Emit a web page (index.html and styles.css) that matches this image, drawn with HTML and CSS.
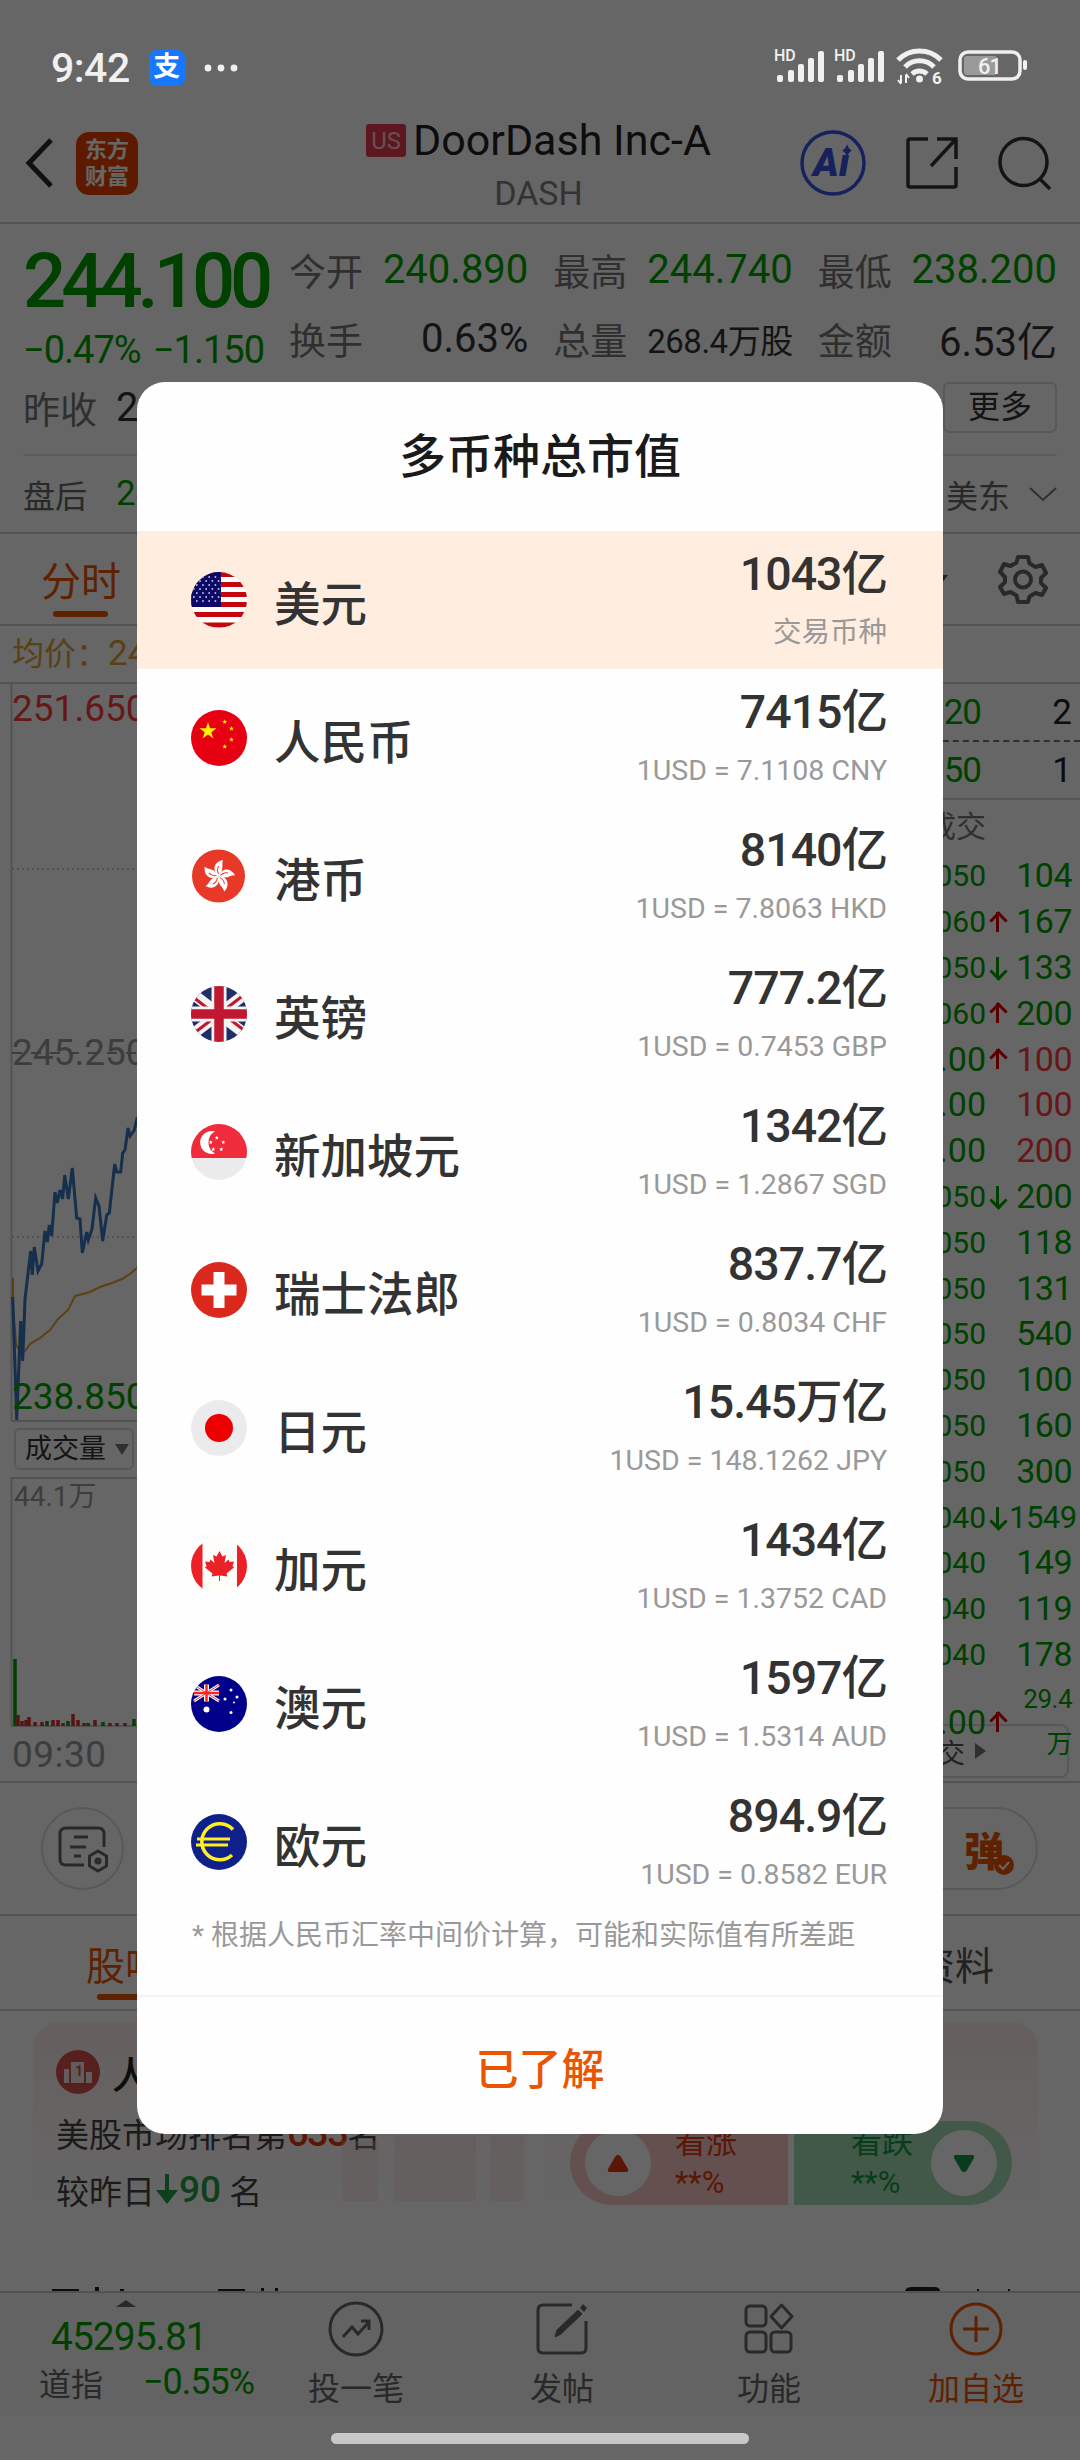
FILE: index.html
```html
<!DOCTYPE html>
<html lang="zh-CN">
<head>
  <meta charset="UTF-8" />
  <meta name="viewport" content="width=device-width, initial-scale=1.0"/>
  <title>DoorDash Inc-A</title>
  <link rel="stylesheet" href="styles.css">
</head>
<body>
  <div class="page">
    <div class="status-bar">
      <div class="status-left">
        <span class="clock">9:42</span>
        <span class="alipay">支</span>
        <svg width="34" height="10" viewBox="0 0 34 10" fill="#f0f0f0"><circle cx="4" cy="5" r="3.4"/><circle cx="17" cy="5" r="3.4"/><circle cx="30" cy="5" r="3.4"/></svg>
      </div>
      <svg class="status-icons" width="256" height="40" viewBox="0 0 256 40" fill="#f0f0f0">
        <text x="0" y="13" class="hd">HD</text>
        <g id="signal"><rect x="3" y="27" width="6" height="7" rx="2"/><rect x="14" y="22" width="6" height="12" rx="2"/><rect x="24" y="16" width="6" height="18" rx="2"/><rect x="34" y="10" width="6" height="24" rx="2"/><rect x="44" y="3" width="6" height="31" rx="2"/></g>
        <text x="60" y="13" class="hd">HD</text>
        <use href="#signal" x="60"/>
        <g fill="none" stroke="#f0f0f0" stroke-width="5"><path d="M124 12a30 30 0 0 1 43 0"/><path d="M131 19a20 20 0 0 1 29 0"/><path d="M138 26a11 11 0 0 1 15 0"/></g>
        <circle cx="145.500" cy="31" r="3.500"/>
        <path d="M127 27v8M124 32l3 4M132 35v-8M135 30l-3-4" fill="none" stroke="#f0f0f0" stroke-width="2"/>
        <text x="158" y="36" class="six">6</text>
        <rect x="186" y="4" width="60" height="27" rx="8" fill="none" stroke="#f0f0f0" stroke-width="3.500"/>
        <rect x="190" y="8" width="33" height="19" rx="3" fill="#9a9a9a"/>
        <rect x="249" y="12" width="4" height="10" rx="2"/>
        <text x="204" y="25.500" class="battery">61</text>
      </svg>
    </div>

    <header class="header">
      <div class="header-left">
        <svg width="28" height="50" viewBox="0 0 28 50" fill="none" stroke="#2a2a2a" stroke-width="5"><path d="M26 2L4 25l22 23"/></svg>
        <span class="logo">东方<br>财富</span>
      </div>
      <div class="header-title">
        <div class="stock-name"><span class="us">US</span>DoorDash Inc-A</div>
        <div class="stock-code">DASH</div>
      </div>
      <div class="header-right">
        <svg width="66" height="66" viewBox="0 0 66 66"><circle cx="33" cy="33" r="31" fill="none" stroke="#3a56e8" stroke-width="3.500"/><text x="13" y="46" class="ai">Aı</text><path d="M47 14q1.500 5 5 6.500q-3.500 1.500-5 6.500q-1.500-5-5-6.500q3.500-1.500 5-6.500" fill="#3a56e8"/></svg>
        <svg width="54" height="54" viewBox="0 0 54 54" fill="none" stroke="#333" stroke-width="3.500"><path d="M23 3H5q-2 0-2 2v44q0 2 2 2h44q2 0 2-2V31"/><path d="M32 3h19v20M51 3L26 30"/></svg>
        <svg width="54" height="54" viewBox="0 0 54 54" fill="none" stroke="#333" stroke-width="3.500"><circle cx="25.500" cy="26" r="23.500"/><path d="M41 42l11 11"/></svg>
      </div>
    </header>

    <section class="quote">
      <div class="quote-top">
        <div class="quote-main">
          <div class="price">244.100</div>
          <div class="change"><span>−0.47%</span><span>−1.150</span></div>
        </div>
        <div class="quote-grid">
          <div><label>今开</label><b class="green">240.890</b></div>
          <div><label>最高</label><b class="green">244.740</b></div>
          <div><label>最低</label><b class="green">238.200</b></div>
          <div><label>换手</label><b>0.63%</b></div>
          <div><label>总量</label><b class="small">268.4万股</b></div>
          <div><label>金额</label><b>6.53亿</b></div>
        </div>
      </div>
      <div class="quote-more"><label>昨收</label><b>245.250</b><span class="more-btn">更多</span></div>
      <div class="after-hours"><label>盘后</label><b class="green">244</b><span class="zone">美东</span>
        <svg width="28" height="16" viewBox="0 0 28 16" fill="none" stroke="#777" stroke-width="2"><path d="M1 2l13 12L27 2"/></svg>
      </div>
    </section>

    <nav class="chart-tabs">
      <span class="active">分时</span>
      <svg class="tri" width="14" height="9" viewBox="0 0 14 9" fill="#555"><path d="M0 0h14L7 9z"/></svg>
      <svg width="50" height="50" viewBox="0 0 50 50" fill="none" stroke="#666" stroke-width="4" stroke-linejoin="round"><path d="M20 3h10l1.500 6.500 6 3.500 6.500-2 4 8-5 5v5l5 5-4 7-6.500-2-6 3.500L30 48H20l-1.500-6.500-6-3.500-6.500 2-4-7 5-5v-5l-5-5 4-8 6.500 2 6-3.500z"/><circle cx="25" cy="25.500" r="8"/></svg>
    </nav>
    <div class="average">均价：<span>244.3</span></div>

    <section class="chart">
      <div class="chart-left">
        <svg class="plot" width="560" height="1044" viewBox="0 0 560 1044" fill="none">
          <path d="M11.500 0V737M11 737h549M11.500 793V1042M11 794h549M11 1042h549" stroke="#ccc" stroke-width="2"/>
          <path d="M12 185h548M12 553h548" stroke="#bbb" stroke-width="1.500" stroke-dasharray="2 3"/>
          <path d="M12 369h548" stroke="#999" stroke-width="2" stroke-dasharray="10 9"/>
          <path d="M13 594V620L16 660L20 668L25 667L30 660L40 654L50 646L58 635L68 626L75 612L90 608L100 603L112 599L122 595L130 590L138 583" stroke="#e0a030" stroke-width="2"/>
          <path d="M12.700 613L16.700 736L20.700 637L22.700 677L25 615L30.700 567L32.300 591L34.300 563L38 587L41.700 580L45 547L47.300 558L49.300 541L51.700 552L55 508L57.300 519L60 506L62.700 515L64.700 491L68.300 515L72.300 484L76.700 534L80 535L82.300 569L86.700 548L88.300 556L92 545L95.700 514L99 522L102.700 557L106.700 531L109.300 529L114.700 480L116.700 488H120.700L122.700 469L125 466L128 444L130 452L134.300 446L137.300 433" stroke="#3575be" stroke-width="3"/>
          <path d="M15 975v67M47 1037v5M68 1037v5M88 1039v3M103 1038v4M134 1035v7" stroke="#00a000" stroke-width="3.500"/>
          <path d="M18 1031v11M22 1037v5M26 1036v6M29 1033v9M35 1038v4M42 1038v4M53 1036v6M58 1036v6M63 1039v3M73 1030v12M78 1036v6M84 1039v3M95 1036v6M110 1039v3M117 1039v3M125 1039v3" stroke="#e03030" stroke-width="3.500"/>
        </svg>
        <div class="axis">
          <span class="red top">251.650</span>
          <span class="gray mid">245.250</span>
          <span class="green low">238.850</span>
          <span class="indicator">成交量<i></i></span>
          <span class="volume">44.1万</span>
          <span class="time">09:30</span>
        </div>
      </div>
      <div class="order-book">
        <div class="level"><span class="green">243.120</span><em>2</em></div>
        <div class="level second"><span class="green">243.050</span><em>1</em></div>
        <div class="deal-title">成交</div>
        <div class="deal"><span>244.050</span><i></i><em>104</em></div>
        <div class="deal"><span>244.060</span><i class="up"></i><em>167</em></div>
        <div class="deal"><span>244.050</span><i class="down"></i><em>133</em></div>
        <div class="deal"><span>244.060</span><i class="up"></i><em>200</em></div>
        <div class="deal"><span class="big">244.00</span><i class="up"></i><em class="red">100</em></div>
        <div class="deal"><span class="big">244.00</span><i></i><em class="red">100</em></div>
        <div class="deal"><span class="big">244.00</span><i></i><em class="red">200</em></div>
        <div class="deal"><span>244.050</span><i class="down"></i><em>200</em></div>
        <div class="deal"><span>244.050</span><i></i><em>118</em></div>
        <div class="deal"><span>244.050</span><i></i><em>131</em></div>
        <div class="deal"><span>244.050</span><i></i><em>540</em></div>
        <div class="deal"><span>244.050</span><i></i><em>100</em></div>
        <div class="deal"><span>244.050</span><i></i><em>160</em></div>
        <div class="deal"><span>244.050</span><i></i><em>300</em></div>
        <div class="deal"><span>244.040</span><i class="down"></i><em class="long">1549</em></div>
        <div class="deal"><span>244.040</span><i></i><em>149</em></div>
        <div class="deal"><span>244.040</span><i></i><em>119</em></div>
        <div class="deal"><span>244.040</span><i></i><em>178</em></div>
        <div class="deal"><span class="big">244.00</span><i class="up"></i><em class="wan">29.4万</em></div>
        <div class="all-deals">成交<i></i></div>
      </div>
    </section>

    <section class="tools">
      <span class="round-btn">
        <svg width="52" height="48" viewBox="0 0 52 48" fill="none" stroke="#666" stroke-width="3"><path d="M27 40H9q-6 0-6-6V9q0-6 6-6h32q6 0 6 6v13"/><path d="M17 12h14M13 22h16M17 31h7"/><path d="M41 26l8.500 5v10L41 46l-8.500-5V31z"/><circle cx="41" cy="36" r="2"/></svg>
      </span>
      <span class="pill-btn">弹<svg width="20" height="20" viewBox="0 0 20 20"><circle cx="10" cy="10" r="10" fill="#ea5504"/><path d="M5 10l4 4 6-7" fill="none" stroke="#fff" stroke-width="2"/></svg></span>
    </section>

    <nav class="info-tabs"><span class="active">股吧</span><span>资料</span></nav>

    <section class="cards">
      <div class="card">
        <h3><svg width="44" height="44" viewBox="0 0 44 44"><circle cx="22" cy="22" r="22" fill="#d5524d"/><path d="M8 33V19h5v14zM15 33V12h13v21zM30 33V22h6v11z" fill="#f7e5e5"/><text x="19" y="26" class="rank-one">1</text></svg>人气</h3>
        <p>美股市场排名第<b class="hot">633</b>名</p>
        <p>较昨日<svg width="24" height="31" viewBox="0 0 24 31" fill="#22a045"><path d="M10 0h4v16h9L12 30 1 16h9z"/></svg><b class="cool">90</b> 名</p>
        <svg class="podium" width="185" height="70" viewBox="0 0 185 70" fill="#f2d5cc"><path d="M0 5h36v60H0zM52 0h82v65H52zM148 0h34v65h-34z" opacity=".3"/></svg>
      </div>
      <div class="card">
        <div class="vote">
          <div class="rise"><span class="knob"><svg width="22" height="17" viewBox="0 0 22 17" fill="#e03a10"><path d="M11 0q2 0 3 2l7 12q1 3-2 3H3q-3 0-2-3L8 2q1-2 3-2"/></svg></span><p>看涨<br>**%</p></div>
          <div class="fall"><p>看跌<br>**%</p><span class="knob"><svg width="22" height="17" viewBox="0 0 22 17" fill="#139a42"><path d="M11 17q-2 0-3-2L1 3Q0 0 3 0h16q3 0 2 3l-7 12q-1 2-3 2"/></svg></span></div>
        </div>
      </div>
      <svg class="peek" width="1080" height="4" viewBox="0 0 1080 4" fill="#222"><path d="M52 2h27v2H52zM95 0h4v4h-4zM120 2h4v2h-4zM218 2h27v2h-27zM261 1h3v3h-3zM275 1h3v3h-3zM905 4q1-4 7-4h22q6 0 6 4zM977 2h2v2h-2zM1008 2h2v2h-2z"/></svg>
    </section>

    <nav class="bottom-nav">
      <div class="index">
        <i></i>
        <strong>45295.81</strong>
        <div><span>道指</span><span class="green">−0.55%</span></div>
      </div>
      <div class="item"><svg width="56" height="56" viewBox="0 0 56 56" fill="none" stroke="#666" stroke-width="3"><circle cx="28" cy="28" r="26"/><path d="M15 36l9-10 6 7 11-12M33 20h8v9"/></svg>投一笔</div>
      <div class="item"><svg width="56" height="56" viewBox="0 0 56 56" fill="none" stroke="#666" stroke-width="3"><path d="M38 4H9q-5 0-5 5v38q0 5 5 5h38q5 0 5-5V20"/><path d="M21 36l2-7L44 9l4 4-21 20z" fill="#666" stroke-width="1"/><path d="M46 7l3-4 4 4-3 4z" fill="#666" stroke="none"/></svg>发帖</div>
      <div class="item"><svg width="56" height="56" viewBox="0 0 56 56" fill="none" stroke="#666" stroke-width="3"><rect x="5" y="5" width="20" height="20" rx="4"/><rect x="5" y="31" width="20" height="20" rx="4"/><rect x="30" y="31" width="20" height="20" rx="4"/><path d="M40.500 4L51 15.500 40.500 27 30 15.500z" stroke-linejoin="round"/></svg>功能</div>
      <div class="item add"><svg width="56" height="56" viewBox="0 0 56 56" fill="none" stroke="#ea5504" stroke-width="3"><circle cx="28" cy="28" r="25"/><path d="M28 15v26M15 28h26"/></svg>加自选</div>
    </nav>
    <div class="home-area"><span class="home-bar"></span></div>

    <div class="mask">
      <div class="modal">
        <h2>多币种总市值</h2>
        <ul class="currency-list">
          <li class="current">
            <svg class="flag" viewBox="0 0 56 56"><path d="M0 0h56v56H0z" fill="#fff"/><path d="M0 2.500h56M0 12.500h56M0 22.500h56M0 32.500h56M0 42.500h56M0 53h56" stroke="#c4060c" stroke-width="5"/><path d="M0 0h30v35H0z" fill="#0c0a66"/><path d="M5 5h25M2 9h28M5 13h25M2 17h28M5 21h25M2 25h28M5 29h25" stroke="#dfe0f5" stroke-width="1.600" stroke-dasharray="1.600 4.600"/></svg>
            <span class="name">美元</span><div class="value"><b>1043亿</b><small>交易币种</small></div>
          </li>
          <li>
            <svg class="flag" viewBox="0 0 56 56"><path d="M0 0h56v56H0z" fill="#e60012"/><g fill="#fff100"><path id="star" d="M17 12l2 6.300h6.600l-5.300 3.900 2 6.300-5.300-3.900-5.300 3.900 2-6.300-5.300-3.900H15z"/><use href="#star" transform="translate(28.800 5.800) scale(.29)"/><use href="#star" transform="translate(35.500 12.500) scale(.29)"/><use href="#star" transform="translate(35.500 23.500) scale(.29)"/><use href="#star" transform="translate(28.800 30.500) scale(.29)"/></g></svg>
            <span class="name">人民币</span><div class="value"><b>7415亿</b><small>1USD = 7.1108 CNY</small></div>
          </li>
          <li>
            <svg class="flag" viewBox="0 0 56 56"><circle cx="27.500" cy="28" r="26.500" fill="#e83828"/><g fill="#fff"><path id="petal" d="M27.500 28C21 23 22 14 32 12C30 17 34 21 27.500 28z"/><use href="#petal" transform="rotate(72 27.500 28)"/><use href="#petal" transform="rotate(144 27.500 28)"/><use href="#petal" transform="rotate(216 27.500 28)"/><use href="#petal" transform="rotate(288 27.500 28)"/></g><g fill="none" stroke="#e83828"><path id="vein" d="M27.500 26q-2.500-4 0-8"/><use href="#vein" transform="rotate(72 27.500 28)"/><use href="#vein" transform="rotate(144 27.500 28)"/><use href="#vein" transform="rotate(216 27.500 28)"/><use href="#vein" transform="rotate(288 27.500 28)"/></g></svg>
            <span class="name">港币</span><div class="value"><b>8140亿</b><small>1USD = 7.8063 HKD</small></div>
          </li>
          <li>
            <svg class="flag" viewBox="0 0 56 56"><path d="M0 0h56v56H0z" fill="#1f2f68"/><path d="M-2 5L58 51M-2 51L58 5" stroke="#f4f4f4" stroke-width="11"/><path d="M0 9.500L26 29.500M56 46.500L30 26.500M0 49.500L26 29.500M56 6.500L30 26.500" stroke="#c01830" stroke-width="3"/><path d="M28 0v56M0 28h56" stroke="#f4f4f4" stroke-width="15"/><path d="M28 0v56M0 28h56" stroke="#c01830" stroke-width="9.500"/></svg>
            <span class="name">英镑</span><div class="value"><b>777.2亿</b><small>1USD = 0.7453 GBP</small></div>
          </li>
          <li>
            <svg class="flag" viewBox="0 0 56 56"><path d="M0 0h56v34H0z" fill="#ef2b3c"/><path d="M0 34h56v22H0z" fill="#ebebed"/><path d="M24 7.500a11.500 11.500 0 1 0 0 22a12.500 12.500 0 0 1 0-22z" fill="#fff"/><g fill="#fff"><use href="#star" transform="translate(21.500 8.500) scale(.25)"/><use href="#star" transform="translate(15.500 13) scale(.25)"/><use href="#star" transform="translate(28 13) scale(.25)"/><use href="#star" transform="translate(18 20) scale(.25)"/><use href="#star" transform="translate(26 20) scale(.25)"/></g></svg>
            <span class="name">新加坡元</span><div class="value"><b>1342亿</b><small>1USD = 1.2867 SGD</small></div>
          </li>
          <li>
            <svg class="flag" viewBox="0 0 56 56"><path d="M0 0h56v56H0z" fill="#da291c"/><path d="M28 10v36M10.500 28h35" stroke="#fff" stroke-width="11"/></svg>
            <span class="name">瑞士法郎</span><div class="value"><b>837.7亿</b><small>1USD = 0.8034 CHF</small></div>
          </li>
          <li>
            <svg class="flag" viewBox="0 0 56 56"><path d="M0 0h56v56H0z" fill="#ebebed"/><circle cx="28" cy="28" r="14" fill="#ec0000"/></svg>
            <span class="name">日元</span><div class="value"><b>15.45万亿</b><small>1USD = 148.1262 JPY</small></div>
          </li>
          <li>
            <svg class="flag" viewBox="0 0 56 56"><path d="M0 0h56v56H0z" fill="#fffefa"/><path d="M0 0h11.500v56H0zM46 0h10v56H46z" fill="#ec2027"/><path d="M28.500 13l3 5.500 3.500-1.500-1.500 8 4-3.500 1 2.500 4.500-.5-1.500 4.500 1.500 1.500-7.500 6 1 3-7.500-1v5.500h-1v-5.500l-7.500 1 1-3-7.500-6 1.500-1.500-1.500-4.500 4.500.5 1-2.500 4 3.500-1.500-8 3.500 1.500z" fill="#ec2027"/></svg>
            <span class="name">加元</span><div class="value"><b>1434亿</b><small>1USD = 1.3752 CAD</small></div>
          </li>
          <li>
            <svg class="flag" viewBox="0 0 56 56"><path d="M0 0h56v56H0z" fill="#00008b"/><path d="M3 9l25 16M3 25L28 9" stroke="#fff" stroke-width="3"/><path d="M15.500 8.500v17M3 17h25" stroke="#fff" stroke-width="5"/><path d="M3 9l25 16M3 25L28 9" stroke="#f33" stroke-width="1"/><path d="M15.500 8.500v17M3 17h25" stroke="#f22" stroke-width="2.500"/><g fill="#fff"><circle cx="15.500" cy="33.500" r="3"/><circle cx="40" cy="14" r="1.500"/><circle cx="34" cy="23" r="1.500"/><circle cx="46" cy="21" r="1.500"/><circle cx="43" cy="26.500" r="1"/><circle cx="40" cy="36.500" r="1.500"/></g></svg>
            <span class="name">澳元</span><div class="value"><b>1597亿</b><small>1USD = 1.5314 AUD</small></div>
          </li>
          <li>
            <svg class="flag" viewBox="0 0 56 56"><path d="M0 0h56v56H0z" fill="#10208a"/><path d="M42 15.500A18 18 0 1 0 41 41" fill="none" stroke="#ffef1e" stroke-width="3.500"/><path d="M6 25h33M5 31h32" stroke="#ffef1e" stroke-width="3"/></svg>
            <span class="name">欧元</span><div class="value"><b>894.9亿</b><small>1USD = 0.8582 EUR</small></div>
          </li>
        </ul>
        <p class="note">* 根据人民币汇率中间价计算，可能和实际值有所差距</p>
        <button class="confirm">已了解</button>
      </div>
    </div>
  </div>
</body>
</html>
```

FILE: styles.css
```css
* {
  box-sizing: border-box;
  margin: 0;
  padding: 0;
}

body {
  width: 1080px;
  font-family: Roboto, 'Noto Sans CJK SC', sans-serif;
  color: #333;
  background: #fff;
}

b, em, i {
  font-weight: normal;
  font-style: normal;
}

svg {
  display: block;
  flex: none;
}

.page {
  position: relative;
  width: 1080px;
  height: 2460px;
  overflow: hidden;
}

.green { color: #00a400; }
.red { color: #ff3b3b; }
.gray { color: #999; }

/* status bar stays above the mask */
.status-bar {
  position: relative;
  z-index: 2;
  height: 108px;
  padding: 28px 50px 0 51px;
  display: flex;
  justify-content: space-between;
  align-items: center;
  color: #f0f0f0;
}

.status-left {
  display: flex;
  align-items: center;
  gap: 19px;
}

.clock {
  font-size: 41px;
  font-weight: 500;
  letter-spacing: -.5px;
}

.alipay {
  width: 36px;
  height: 36px;
  border-radius: 8px;
  background: #1677ff;
  color: #fff;
  font-size: 27px;
  font-weight: bold;
  line-height: 35px;
  text-align: center;
}

.hd { font-size: 16px; font-weight: 500; }
.six { font-size: 17px; font-weight: bold; }
.battery { font-size: 22px; font-weight: 500; letter-spacing: -1px; }

/* header */
.header {
  height: 116px;
  padding: 0 28px 0 25px;
  border-bottom: 2px solid #d0d0d0;
  display: grid;
  grid-template-columns: 1fr auto 1fr;
  align-items: center;
}

.header-left {
  display: flex;
  align-items: center;
  gap: 23px;
  padding-bottom: 4px;
}

.logo {
  width: 62px;
  height: 63px;
  padding-top: 4px;
  border-radius: 13px;
  background: #e84300;
  color: #fff;
  font-size: 22px;
  font-weight: bold;
  line-height: 27px;
  text-align: center;
}

.header-title {
  display: flex;
  flex-direction: column;
  align-items: center;
}

.stock-name {
  display: flex;
  align-items: center;
  height: 56px;
  font-size: 43px;
  color: #222;
  gap: 7px;
  white-space: nowrap;
}

.us {
  width: 40px;
  height: 33px;
  border-radius: 3px;
  background: #e93a54;
  color: #ffc9d0;
  font-size: 24px;
  line-height: 34px;
  text-align: center;
}

.stock-code {
  height: 50px;
  line-height: 50px;
  font-size: 34px;
  color: #808080;
}

.header-right {
  display: flex;
  justify-content: flex-end;
  align-items: center;
  gap: 39px;
  padding-bottom: 4px;
}

.ai {
  font-size: 39px;
  font-weight: 900;
  font-style: italic;
  fill: #3a56e8;
}

/* quote */
.quote {
  height: 308px;
  padding: 11px 23px 0;
}

.quote label {
  font-size: 37px;
  color: #777;
}

.quote b {
  font-size: 40px;
}

.quote .green { color: #00a400; }

.quote-top {
  height: 138px;
  display: flex;
  gap: 25px;
}

.quote-main {
  width: 241px;
  color: #00a400;
}

.price {
  height: 92px;
  line-height: 92px;
  font-size: 76px;
  font-weight: 500;
  letter-spacing: -5px;
}

.change {
  height: 46px;
  line-height: 46px;
  display: flex;
  justify-content: space-between;
  font-size: 38px;
  letter-spacing: -1px;
}

.quote-grid {
  flex: 1;
  display: grid;
  grid-template-columns: repeat(3, 1fr);
  grid-auto-rows: 69px;
  column-gap: 25px;
}

.quote-grid div {
  display: flex;
  justify-content: space-between;
  align-items: center;
  white-space: nowrap;
}

.quote .small {
  font-size: 33px;
  letter-spacing: -.5px;
}

.quote-more {
  height: 69px;
  display: flex;
  align-items: center;
  gap: 19px;
}

.more-btn {
  width: 114px;
  height: 51px;
  margin-left: auto;
  border: 2px solid #ddd;
  border-radius: 6px;
  font-size: 32px;
  line-height: 46px;
  text-align: center;
}

.after-hours {
  height: 77px;
  margin-top: 12px;
  border-top: 2px solid #e6e6e6;
  display: flex;
  align-items: center;
}

.after-hours label,
.after-hours .zone {
  font-size: 32px;
  color: #666;
}

.after-hours b {
  margin-left: 29px;
  font-size: 35px;
}

.after-hours .zone {
  margin: 0 19px 0 auto;
}

/* chart tabs */
.chart-tabs {
  height: 94px;
  padding: 0 32px 0 41px;
  border-top: 2px solid #d0d0d0;
  border-bottom: 2px solid #d0d0d0;
  display: flex;
  align-items: center;
}

.active {
  position: relative;
  color: #ea5504;
}

.active::after {
  content: "";
  position: absolute;
  left: 50%;
  bottom: -9px;
  width: 55px;
  height: 6px;
  margin-left: -28px;
  border-radius: 3px;
  background: #ea5504;
}

.chart-tabs .active {
  font-size: 40px;
}

.tri {
  margin: 0 50px 0 auto;
}

.average {
  height: 58px;
  padding-left: 12px;
  border-bottom: 2px solid #d0d0d0;
  font-size: 32px;
  line-height: 56px;
  color: #e0a030;
}

.average span {
  font-size: 35px;
}

/* chart */
.chart {
  height: 1099px;
  display: flex;
  justify-content: space-between;
  border-bottom: 2px solid #d0d0d0;
}

.chart-left {
  display: grid;
  width: 560px;
}

.plot,
.axis {
  grid-area: 1 / 1;
}

.axis {
  display: flex;
  flex-direction: column;
  align-items: flex-start;
  padding-left: 12px;
  font-size: 37px;
  line-height: 44px;
}

.top { margin-top: 3px; }
.mid { margin-top: 300px; }
.low { margin-top: 300px; }

.indicator {
  width: 120px;
  height: 42px;
  margin: 9px 0 0 2px;
  padding-left: 9px;
  border: 2px solid #ddd;
  border-radius: 6px;
  display: flex;
  align-items: center;
  gap: 9px;
  font-size: 27px;
}

.indicator i {
  border: 7px solid transparent;
  border-top: 11px solid #777;
  border-bottom: 0;
}

.volume {
  margin: 5px 0 0 2px;
  font-size: 28px;
  color: #999;
}

.time {
  margin-top: 214px;
  color: #999;
  letter-spacing: .5px;
}

.order-book {
  width: 400px;
  color: #00a400;
}

.level {
  height: 58px;
  padding: 0 8px 0 0;
  display: grid;
  grid-template-columns: 301px 1fr;
  align-items: center;
  text-align: right;
  font-size: 35px;
  border-bottom: 2px dashed #777;
}

.level span {
  letter-spacing: -1px;
}

.level.second {
  border-bottom: 2px solid #d8d8d8;
}

.level em {
  color: #222;
}

.deal-title {
  width: 306px;
  height: 53px;
  line-height: 54px;
  text-align: right;
  font-size: 30px;
  color: #777;
}

.deal {
  height: 45.8px;
  padding-right: 8px;
  display: grid;
  grid-template-columns: 306px 23px 1fr;
  align-items: center;
  text-align: right;
  font-size: 34px;
  line-height: 45px;
}

.deal span {
  font-size: 30px;
}

.deal .big {
  font-size: 34px;
}

.deal em {
  letter-spacing: -.5px;
}

.deal .long {
  font-size: 31px;
}

.deal .wan {
  font-size: 26px;
}

.deal i {
  position: relative;
  width: 14px;
  height: 20px;
  margin-left: 4px;
}

.up::before,
.down::before {
  content: "";
  position: absolute;
  left: 5.5px;
  top: 0;
  width: 3px;
  height: 20px;
  background: currentColor;
}

.up::after,
.down::after {
  content: "";
  position: absolute;
  left: 2px;
  top: 2px;
  width: 10px;
  height: 10px;
  border-left: 3px solid;
  border-top: 3px solid;
  transform: rotate(45deg);
}

.up { color: #e00000; }

.down::after {
  top: 8px;
  transform: rotate(225deg);
}

.all-deals {
  height: 54px;
  margin: 1px 11px 0 0;
  padding-right: 81px;
  border: 2px solid #ddd;
  border-radius: 8px;
  display: flex;
  justify-content: flex-end;
  align-items: center;
  gap: 10px;
  font-size: 27px;
  color: #555;
}

.all-deals i {
  border: 8px solid transparent;
  border-left: 11px solid #777;
  border-right: 0;
}

/* tools */
.tools {
  height: 133px;
  padding: 0 42px 0 41px;
  display: flex;
  justify-content: space-between;
  align-items: center;
  border-bottom: 2px solid #d0d0d0;
}

.round-btn {
  width: 83px;
  height: 83px;
  border: 2px solid #ddd;
  border-radius: 50%;
  display: flex;
  align-items: center;
  justify-content: center;
}

.pill-btn {
  width: 200px;
  height: 83px;
  padding-right: 22px;
  border: 2px solid #ddd;
  border-radius: 42px;
  display: flex;
  justify-content: flex-end;
  align-items: center;
  font-size: 40px;
  font-weight: 900;
  color: #ea5504;
}

.pill-btn svg {
  margin: 32px 0 0 -10px;
}

/* info tabs */
.info-tabs {
  height: 95px;
  padding: 0 86px;
  display: flex;
  justify-content: space-between;
  align-items: center;
  border-bottom: 2px solid #d0d0d0;
  font-size: 39px;
  color: #555;
}

/* cards */
.cards {
  position: relative;
  height: 280px;
  padding: 11px 42px 0 33px;
  display: flex;
  gap: 17px;
}

.card {
  position: relative;
  flex: 1;
  height: 220px;
  padding: 23px;
  border-radius: 26px;
  background: linear-gradient(#fceeec, #fffdfd 70%, #fff);
}

.card h3 {
  height: 54px;
  display: flex;
  align-items: center;
  gap: 12px;
  font-size: 38px;
  font-weight: 500;
  color: #222;
}

.rank-one {
  font-size: 14px;
  font-weight: bold;
  fill: #d5524d;
}

.card p {
  height: 57px;
  padding-top: 10px;
  display: flex;
  align-items: center;
  font-size: 33px;
  white-space: pre;
  color: #444;
}

.card .hot {
  font-size: 38px;
  font-weight: 500;
  letter-spacing: -1.5px;
  color: #e23a10;
}

.card .cool {
  font-size: 37px;
  font-weight: 500;
  color: #22a045;
}

.podium {
  position: absolute;
  right: 0;
  top: 114px;
}

.vote {
  height: 84px;
  margin: 76px 3px 0;
  display: flex;
  gap: 6px;
}

.vote > div {
  flex: 1;
  display: flex;
  align-items: center;
  justify-content: space-between;
  padding: 0 15px;
  background: #fac8c4;
  border-radius: 42px 0 0 42px;
}

.vote .fall {
  background: #a5dcb5;
  border-radius: 0 42px 42px 0;
}

.knob {
  width: 66px;
  height: 66px;
  border-radius: 50%;
  background: #fff;
  display: flex;
  align-items: center;
  justify-content: center;
}

.vote p {
  height: auto;
  display: block;
  padding: 0;
  font-size: 31px;
  line-height: 40px;
  color: #e03a10;
}

.rise p { margin-right: 36px; }
.fall p { margin-left: 42px; }

.vote .fall p {
  color: #139a42;
}

.peek {
  position: absolute;
  left: 0;
  bottom: 0;
}

/* bottom nav */
.bottom-nav {
  height: 125px;
  border-top: 2px solid #d0d0d0;
  background: #f8f8f8;
  display: grid;
  grid-template-columns: 280px 152px 260px 154px 260px;
}

.index {
  padding: 7px 0 0 39px;
}

.index i {
  display: block;
  width: 0;
  margin-left: 77px;
  border: 10px solid transparent;
  border-top: 0;
  border-bottom: 7px solid #666;
}

.index strong {
  display: block;
  margin: 7px 0 0 12px;
  font-size: 39px;
  font-weight: normal;
  line-height: 46px;
  letter-spacing: -1px;
  color: #00a400;
}

.index div {
  display: flex;
  align-items: center;
  gap: 40px;
  height: 44px;
  font-size: 32px;
  color: #666;
}

.index .green {
  font-size: 36px;
  letter-spacing: -1px;
}

.item {
  padding-top: 8px;
  display: flex;
  flex-direction: column;
  align-items: center;
  font-size: 32px;
  line-height: 48px;
  gap: 8px;
  color: #666;
}

.add {
  color: #ea5504;
}

.home-area {
  position: relative;
  z-index: 2;
  height: 44px;
  padding-top: 17px;
}

.home-bar {
  display: block;
  width: 418px;
  height: 11px;
  margin: 0 auto;
  border-radius: 6px;
  background: #c8c8c8;
}

/* modal */
.mask {
  position: absolute;
  inset: 0;
  padding-top: 382px;
  background: rgba(0, 0, 0, .6);
}

.modal {
  width: 806px;
  height: 1752px;
  margin: 0 auto;
  border-radius: 28px;
  background: #fefefe;
  overflow: hidden;
}

.modal h2 {
  height: 149px;
  font-size: 47px;
  font-weight: 500;
  line-height: 149px;
  text-align: center;
  color: #1a1a1a;
}

.currency-list {
  list-style: none;
}

.currency-list li {
  height: 138px;
  padding: 0 56px 0 54px;
  display: flex;
  align-items: center;
}

.currency-list .current {
  background: #ffede0;
}

.flag {
  width: 56px;
  height: 56px;
  margin-right: 27px;
  border-radius: 50%;
}

.name {
  font-size: 46.500px;
  font-weight: 500;
}

.value {
  margin-left: auto;
  text-align: right;
}

.value b {
  display: block;
  font-size: 46.500px;
  font-weight: 500;
  line-height: 66px;
  letter-spacing: -1px;
}

.value small {
  display: block;
  font-size: 28.500px;
  line-height: 52px;
  color: #999;
}

.note {
  height: 84px;
  padding-left: 55px;
  font-size: 28px;
  line-height: 50px;
  color: #999;
  white-space: nowrap;
}

.confirm {
  display: block;
  width: 100%;
  height: 139px;
  border: 0;
  border-top: 2px solid #f4f4f4;
  background: none;
  font-family: inherit;
  font-size: 43px;
  font-weight: 500;
  color: #ea5504;
}
```
